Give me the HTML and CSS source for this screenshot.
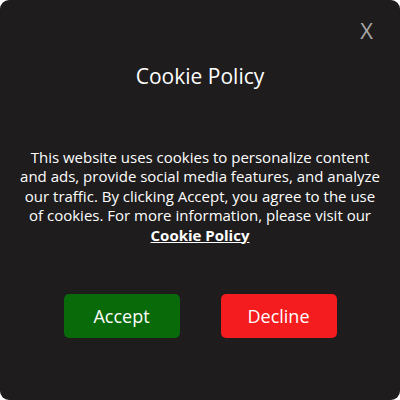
FILE: index.html
```html
<!DOCTYPE html>
<html lang="en">
<head>
<meta charset="utf-8">
<title>Cookie Policy</title>
<link rel="stylesheet" href="styles.css">
</head>
<body>
<div class="modal">
  <button class="close" aria-label="Close">X</button>
  <h2 class="title">Cookie Policy</h2>
  <p class="text">This website uses cookies to personalize content and ads, provide social media features, and analyze our traffic. By clicking Accept, you agree to the use of cookies. For more information, please visit our <a href="#" class="link">Cookie Policy</a></p>
  <div class="actions">
    <button class="btn accept">Accept</button>
    <button class="btn decline">Decline</button>
  </div>
</div>
</body>
</html>
```
FILE: styles.css
```css
html, body {
  margin: 0;
  padding: 0;
  background: #ffffff;
}
body {
  font-family: "Open Sans", "DejaVu Sans", sans-serif;
}
.modal {
  position: relative;
  width: 400px;
  height: 400px;
  box-sizing: border-box;
  background: #1e1c1d;
  border-radius: 9px;
  color: #ffffff;
  display: flex;
  flex-direction: column;
  align-items: center;
  padding: 62px 16px 0;
}
.close {
  position: absolute;
  top: 18px;
  right: 27px;
  background: none;
  border: 0;
  padding: 0;
  color: #a9a9a9;
  font-family: "Open Sans", sans-serif;
  font-size: 22px;
  line-height: 24px;
  cursor: pointer;
}
.title {
  margin: 0;
  font-size: 21px;
  font-weight: 500;
  line-height: 28px;
}
.text {
  margin: 58px 0 0;
  font-size: 15px;
  line-height: 19.4px;
  text-align: center;
}
.link {
  color: #ffffff;
  font-weight: 700;
  text-decoration: underline;
}
.actions {
  display: flex;
  gap: 41px;
  margin-top: 49px;
}
.btn {
  width: 116px;
  height: 44px;
  border: 0;
  border-radius: 5px;
  color: #ffffff;
  font-family: "Open Sans", sans-serif;
  font-size: 18px;
  cursor: pointer;
}
.accept { background: #086a08; }
.decline { background: #f41c1e; }
```
